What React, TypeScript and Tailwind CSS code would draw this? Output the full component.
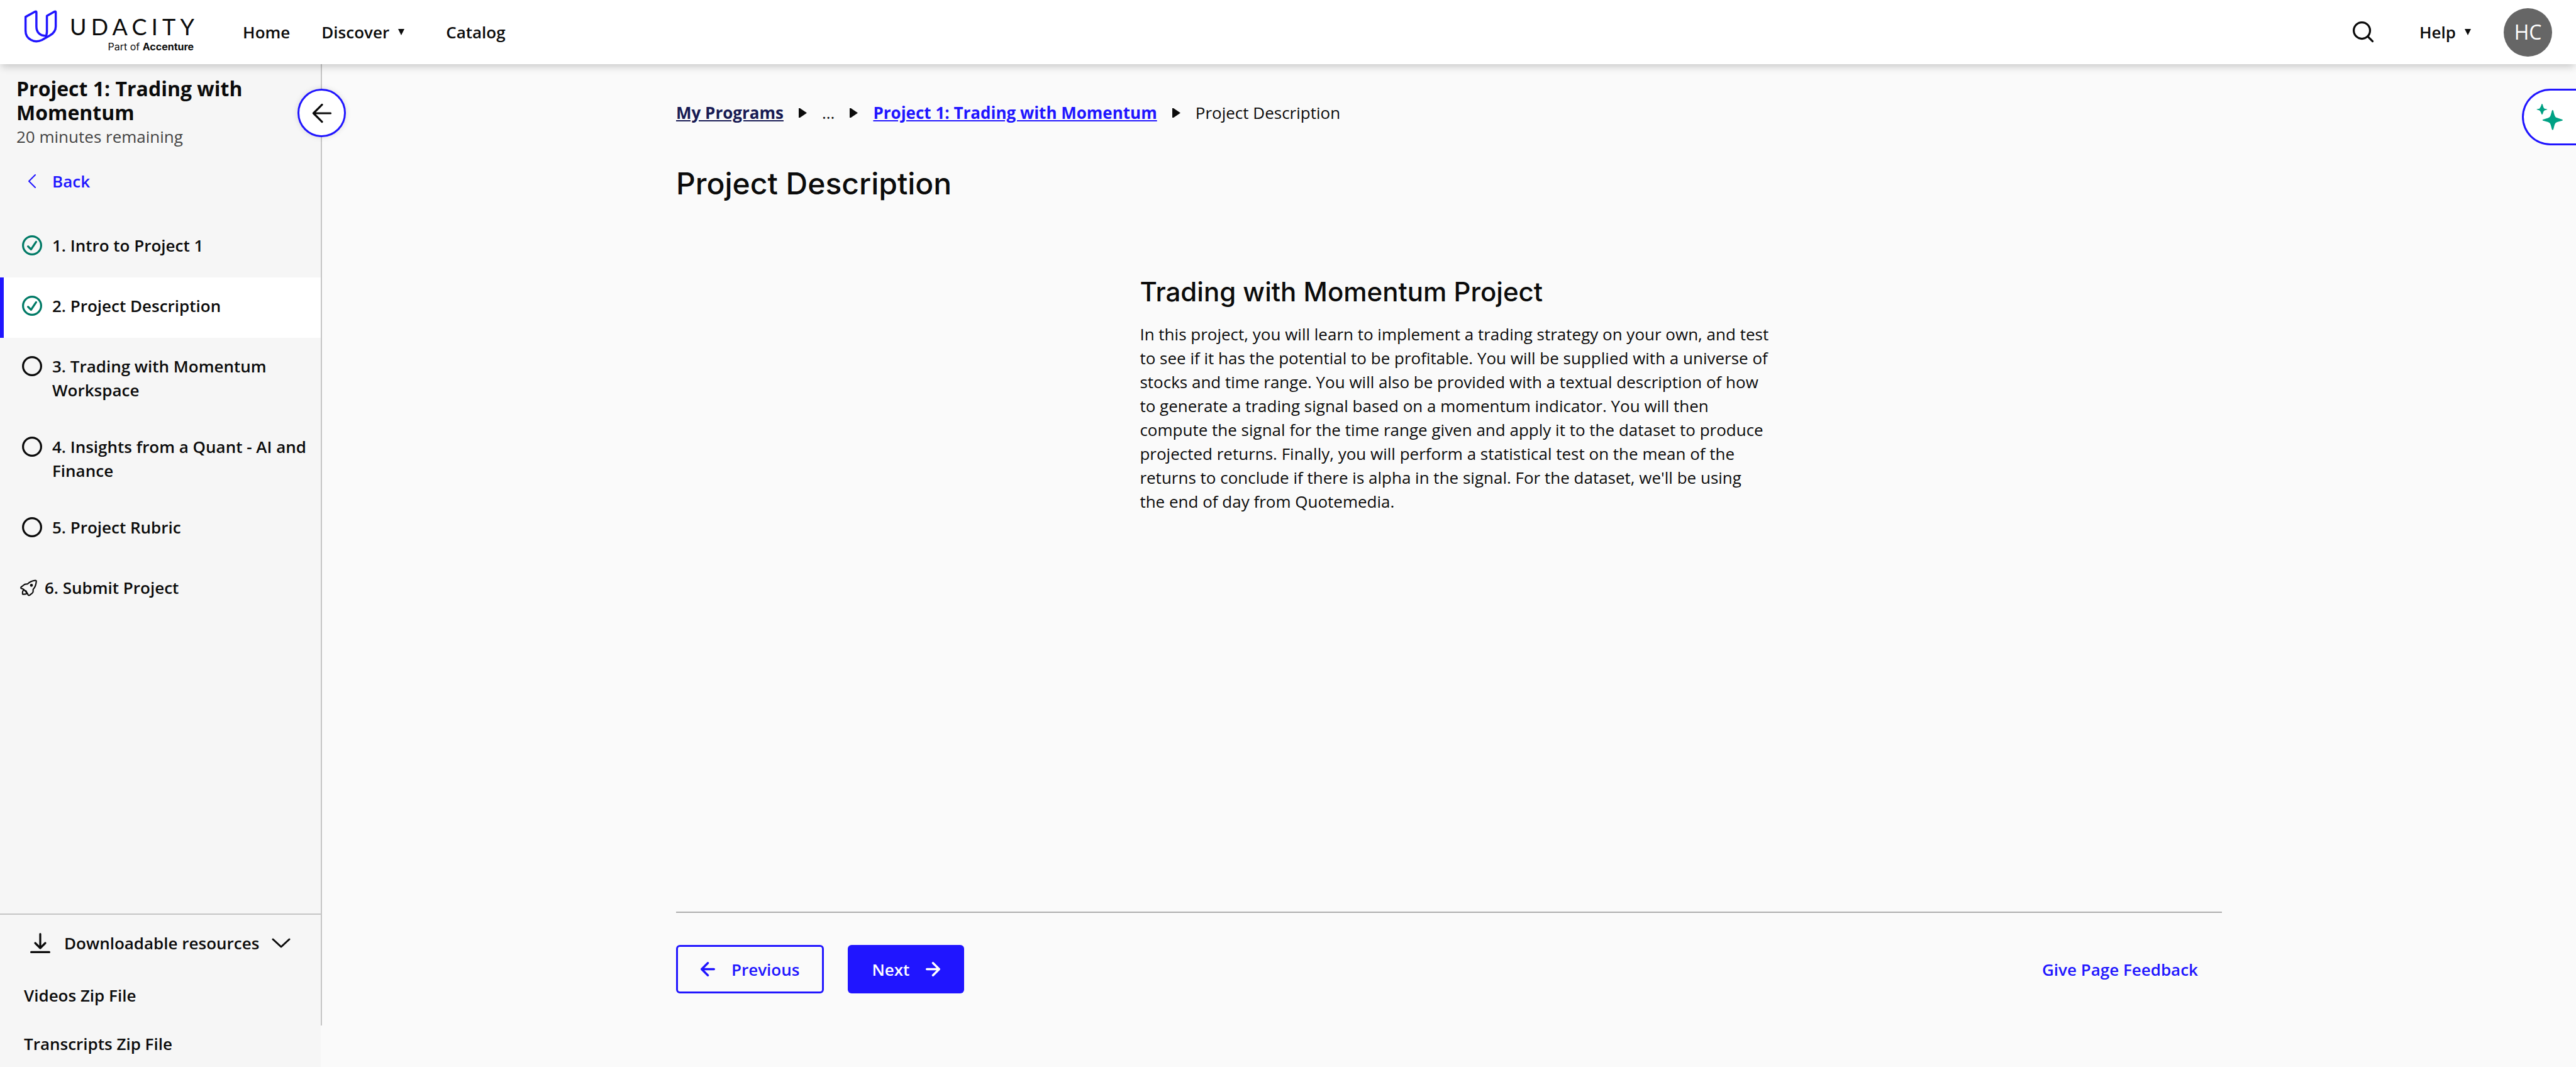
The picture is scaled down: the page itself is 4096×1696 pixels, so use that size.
import React from "react";

type Status = "done" | "open" | "submit";

const lessons: { title: string; status: Status; active?: boolean }[] = [
  { title: "1. Intro to Project 1", status: "done" },
  { title: "2. Project Description", status: "done", active: true },
  { title: "3. Trading with Momentum Workspace", status: "open" },
  { title: "4. Insights from a Quant - AI and Finance", status: "open" },
  { title: "5. Project Rubric", status: "open" },
  { title: "6. Submit Project", status: "submit" },
];

function LogoMark() {
  return (
    <svg viewBox="52 60 198 196" className="h-[52px] w-[53px]" fill="none" stroke="#2015ff" strokeWidth="13" strokeLinejoin="round" aria-hidden="true">
      <path d="M61 186V101L118 69.500Q126 66 126 74V158C126 192 146 214 180 214" />
      <path d="M178 222C186 214 189 205 189 190V95L234 69.500Q242 66 242 74V158C242 186 226 202 206 213L160 239C112 262 61 232 61 184" />
    </svg>
  );
}

function CaretDown() {
  return (
    <svg viewBox="0 0 10 10" className="size-[10px]" fill="currentColor" aria-hidden="true">
      <path d="M0 0H10L5 10Z" />
    </svg>
  );
}

function CaretRight() {
  return (
    <svg viewBox="0 0 13 15" className="h-[15px] w-[13px]" fill="#0b0b0b" aria-hidden="true">
      <path d="M0 0H2L13 7.500L2 15H0Z" />
    </svg>
  );
}

function Arrow({ className, flip }: { className: string; flip?: boolean }) {
  return (
    <svg viewBox="0 0 40 40" className={className} fill="none" stroke="currentColor" strokeWidth="4" strokeLinecap="round" strokeLinejoin="round" aria-hidden="true">
      {flip ? <path d="M3 20H37M20 3L37 20L20 37" /> : <path d="M37 20H3M20 3L3 20L20 37" />}
    </svg>
  );
}

function StatusIcon({ status }: { status: Status }) {
  if (status === "submit") {
    return (
      <svg viewBox="58 62 102 100" className="h-[27px] w-[27px] shrink-0" fill="none" stroke="#0b0b0b" strokeWidth="8" strokeLinejoin="round" strokeLinecap="round" aria-hidden="true">
        <path d="M64 107L82 93Q88 89 95 89L103 88Q119 70 149 67Q156 67 155 74Q153 103 136 121V131Q137 138 131 143L116 155Q108 160 105 152L102 145Q90 130 76 119L67 116Q60 113 64 107Z" />
        <path d="M80 122Q70 132 73 150Q92 152 100 144" />
        <path d="M88 128Q98 130 96 142" />
        <circle cx="126" cy="96" r="5" fill="#0b0b0b" />
      </svg>
    );
  }
  const done = status === "done";
  return (
    <svg viewBox="0 0 40 40" className="size-8 shrink-0" fill="none" stroke={done ? "#017a66" : "#0b0b0b"} strokeWidth="4" strokeLinecap="round" strokeLinejoin="round" aria-hidden="true">
      <circle cx="20" cy="20" r="18" />
      {done && <path d="M12 22L18 28L28 13" />}
    </svg>
  );
}

function Header() {
  return (
    <header className="relative z-20 flex h-[102px] shrink-0 items-center bg-white px-[38px] shadow-[0_6px_12px_-2px_rgba(0,0,0,0.2)]">
      <a href="#" className="flex items-start self-start pt-4" aria-label="Udacity, Part of Accenture">
        <LogoMark />
        <span className="flex flex-col items-end pl-5 pt-2">
          <span className="-mr-2 font-[Lato] text-[36px] leading-9 tracking-[0.2em]">UDACITY</span>
          <span className="pt-1 font-[Inter] text-[16px] leading-5">
            Part of <b className="font-bold">Accenture</b>
          </span>
        </span>
      </a>
      <nav className="ml-[78px] flex items-center gap-[50px] font-semibold">
        <a href="#">Home</a>
        <button type="button" className="flex items-center gap-[14px] pr-4">
          Discover <CaretDown />
        </button>
        <a href="#">Catalog</a>
      </nav>
      <div className="ml-auto flex items-center gap-[52px]">
        <button type="button" aria-label="Search" className="mr-5">
          <svg viewBox="0 0 42 42" className="size-[34px]" fill="none" stroke="#0b0b0b" strokeWidth="4" strokeLinecap="round" aria-hidden="true">
            <circle cx="18" cy="18" r="16" />
            <path d="M30 30L39 39" />
          </svg>
        </button>
        <button type="button" className="flex items-center gap-[14px] font-semibold">
          Help <CaretDown />
        </button>
        <button type="button" className="size-[77px] rounded-full bg-[#666] text-[32px] text-white">
          HC
        </button>
      </div>
    </header>
  );
}

function Sidebar() {
  return (
    <aside className="relative flex w-[512px] shrink-0 flex-col">
      <div className="flex grow flex-col border-r-2 border-[#c5c5c5] bg-[#f6f6f6]">
        <div className="pl-[26px] pr-12 pt-5">
          <h2 className="text-[32px] font-bold leading-[38px]">Project 1: Trading with Momentum</h2>
          <p className="text-[#444]">20 minutes remaining</p>
        </div>
        <a href="#" className="mt-[33px] flex items-center gap-[26px] pl-[45px] font-semibold text-[#2015ff]">
          <svg viewBox="0 0 12 22" className="h-[22px] w-3" fill="none" stroke="currentColor" strokeWidth="2" strokeLinecap="round" strokeLinejoin="round" aria-hidden="true">
            <path d="M11 1L1 11L11 21" />
          </svg>
          Back
        </a>
        <ol className="mt-[38px] font-semibold">
          {lessons.map((l) => (
            <li key={l.title}>
              <a
                href="#"
                aria-current={l.active ? "page" : undefined}
                className={
                  "flex min-h-24 items-start border-l-[6px] py-[26px] pr-4 " +
                  (l.status === "submit" ? "gap-3 pl-[26px] " : "gap-4 pl-[29px] ") +
                  (l.active ? "border-[#2015ff] bg-white" : "border-transparent")
                }
              >
                <span className="flex h-[38px] items-center">
                  <StatusIcon status={l.status} />
                </span>
                <span>{l.title}</span>
              </a>
            </li>
          ))}
        </ol>
        <div className="mt-auto border-t-2 border-[#c5c5c5] font-semibold">
          <button type="button" aria-expanded="true" className="flex items-center pl-12 pt-[26px]">
            <svg viewBox="0 0 40 40" className="size-8" fill="none" stroke="#0b0b0b" strokeWidth="4" strokeLinecap="round" strokeLinejoin="round" aria-hidden="true">
              <path d="M2 38H38M20 2V30M10 20L20 30L30 20" />
            </svg>
            <span className="pl-[22px] pr-5">Downloadable resources</span>
            <svg viewBox="0 0 30 16" className="h-4 w-[30px]" fill="none" stroke="#0b0b0b" strokeWidth="3" strokeLinecap="round" strokeLinejoin="round" aria-hidden="true">
              <path d="M2 2L15 14L28 2" />
            </svg>
          </button>
          <a href="#" className="block pb-[29px] pl-[38px] pt-[45px]">
            Videos Zip File
          </a>
        </div>
      </div>
      <div className="mr-0.5 bg-[#f6f6f6] pb-[18px] pl-[38px] pt-[10px] font-semibold">
        <a href="#">Transcripts Zip File</a>
      </div>
      <button
        type="button"
        aria-label="Collapse sidebar"
        className="absolute -right-[38px] top-[39px] flex size-[77px] items-center justify-center rounded-full border-[3px] border-[#2015ff] bg-white shadow-[0_0_10px_rgba(0,0,0,0.12)]"
      >
        <Arrow className="size-8" />
      </button>
    </aside>
  );
}

function Main() {
  return (
    <main className="relative flex grow flex-col">
      <button
        type="button"
        aria-label="Open AI assistant"
        className="absolute right-0 top-[39px] h-[90px] w-[86px] rounded-l-full border-[3px] border-r-0 border-[#2015ff] bg-white pl-5"
      >
        <svg viewBox="0 0 52 52" className="size-[42px]" fill="#00a184" aria-hidden="true">
          <path d="M11 0Q12 0 12.500 2Q14 9 16 9.500L21 10.500Q22 11 21 11.500L16 13Q14 14 12.500 20Q11 22 10 20Q8 14 6 13L1 11.500Q0 11 1 10.500L6 9.500Q8 8 10 2Q10 0 11 0Z" />
          <path d="M32 12Q33 12 33.500 14Q36 26 39 27L51 31Q53 32 51 33L41 36Q37 37 36 41L33.500 50Q32 53 30.500 50L28 41Q27 37 23 36L13 33Q11 32 13 31L23 28Q27 27 28 23L30.500 14Q31 12 32 12Z" />
        </svg>
      </button>
      <div className="mx-auto flex w-full max-w-[2458px] grow flex-col">
        <nav aria-label="Breadcrumb" className="flex items-center gap-6 pt-[58px]">
          <a href="#" className="font-bold text-[#171a53] underline">My Programs</a>
          <CaretRight />
          <span>...</span>
          <CaretRight />
          <a href="#" className="font-bold text-[#2015ff] underline">Project 1: Trading with Momentum</a>
          <CaretRight />
          <span>Project Description</span>
        </nav>
        <h1 className="pt-[62px] font-[Inter] text-[48px] font-medium leading-[64px]">Project Description</h1>
        <article className="ml-[30%] max-w-[1002px] pt-[114px]">
          <h2 className="pb-[22px] font-[Inter] text-[42px] font-medium leading-[52px]">Trading with Momentum Project</h2>
          <p>
            In this project, you will learn to implement a trading strategy on your own, and test to see if it has the
            potential to be profitable. You will be supplied with a universe of stocks and time range. You will also be
            provided with a textual description of how to generate a trading signal based on a momentum indicator. You
            will then compute the signal for the time range given and apply it to the dataset to produce projected
            returns. Finally, you will perform a statistical test on the mean of the returns to conclude if there is
            alpha in the signal. For the dataset, we'll be using the end of day from Quotemedia.
          </p>
        </article>
        <footer className="mt-auto flex items-center gap-[38px] border-t-2 border-[#aeaeae] pb-[117px] pt-[51px] pr-[38px] font-semibold">
          <button type="button" className="flex h-[77px] items-center gap-[26px] rounded-md border-[3px] border-[#2015ff] px-9 text-[#2015ff]">
            <Arrow className="size-[23px] [stroke-width:6]" />
            Previous
          </button>
          <button type="button" className="flex h-[77px] items-center gap-[26px] rounded-md bg-[#2015ff] px-[38px] text-white">
            Next
            <Arrow className="size-[23px] [stroke-width:6]" flip />
          </button>
          <a href="#" className="ml-auto text-[#2015ff]">Give Page Feedback</a>
        </footer>
      </div>
    </main>
  );
}

export default function App() {
  return (
    <div className="flex min-h-screen flex-col bg-[#fafafa] font-['Open_Sans',sans-serif] text-[26px] leading-[38px] text-[#0b0b0b]">
      <Header />
      <div className="flex grow">
        <Sidebar />
        <Main />
      </div>
    </div>
  );
}
